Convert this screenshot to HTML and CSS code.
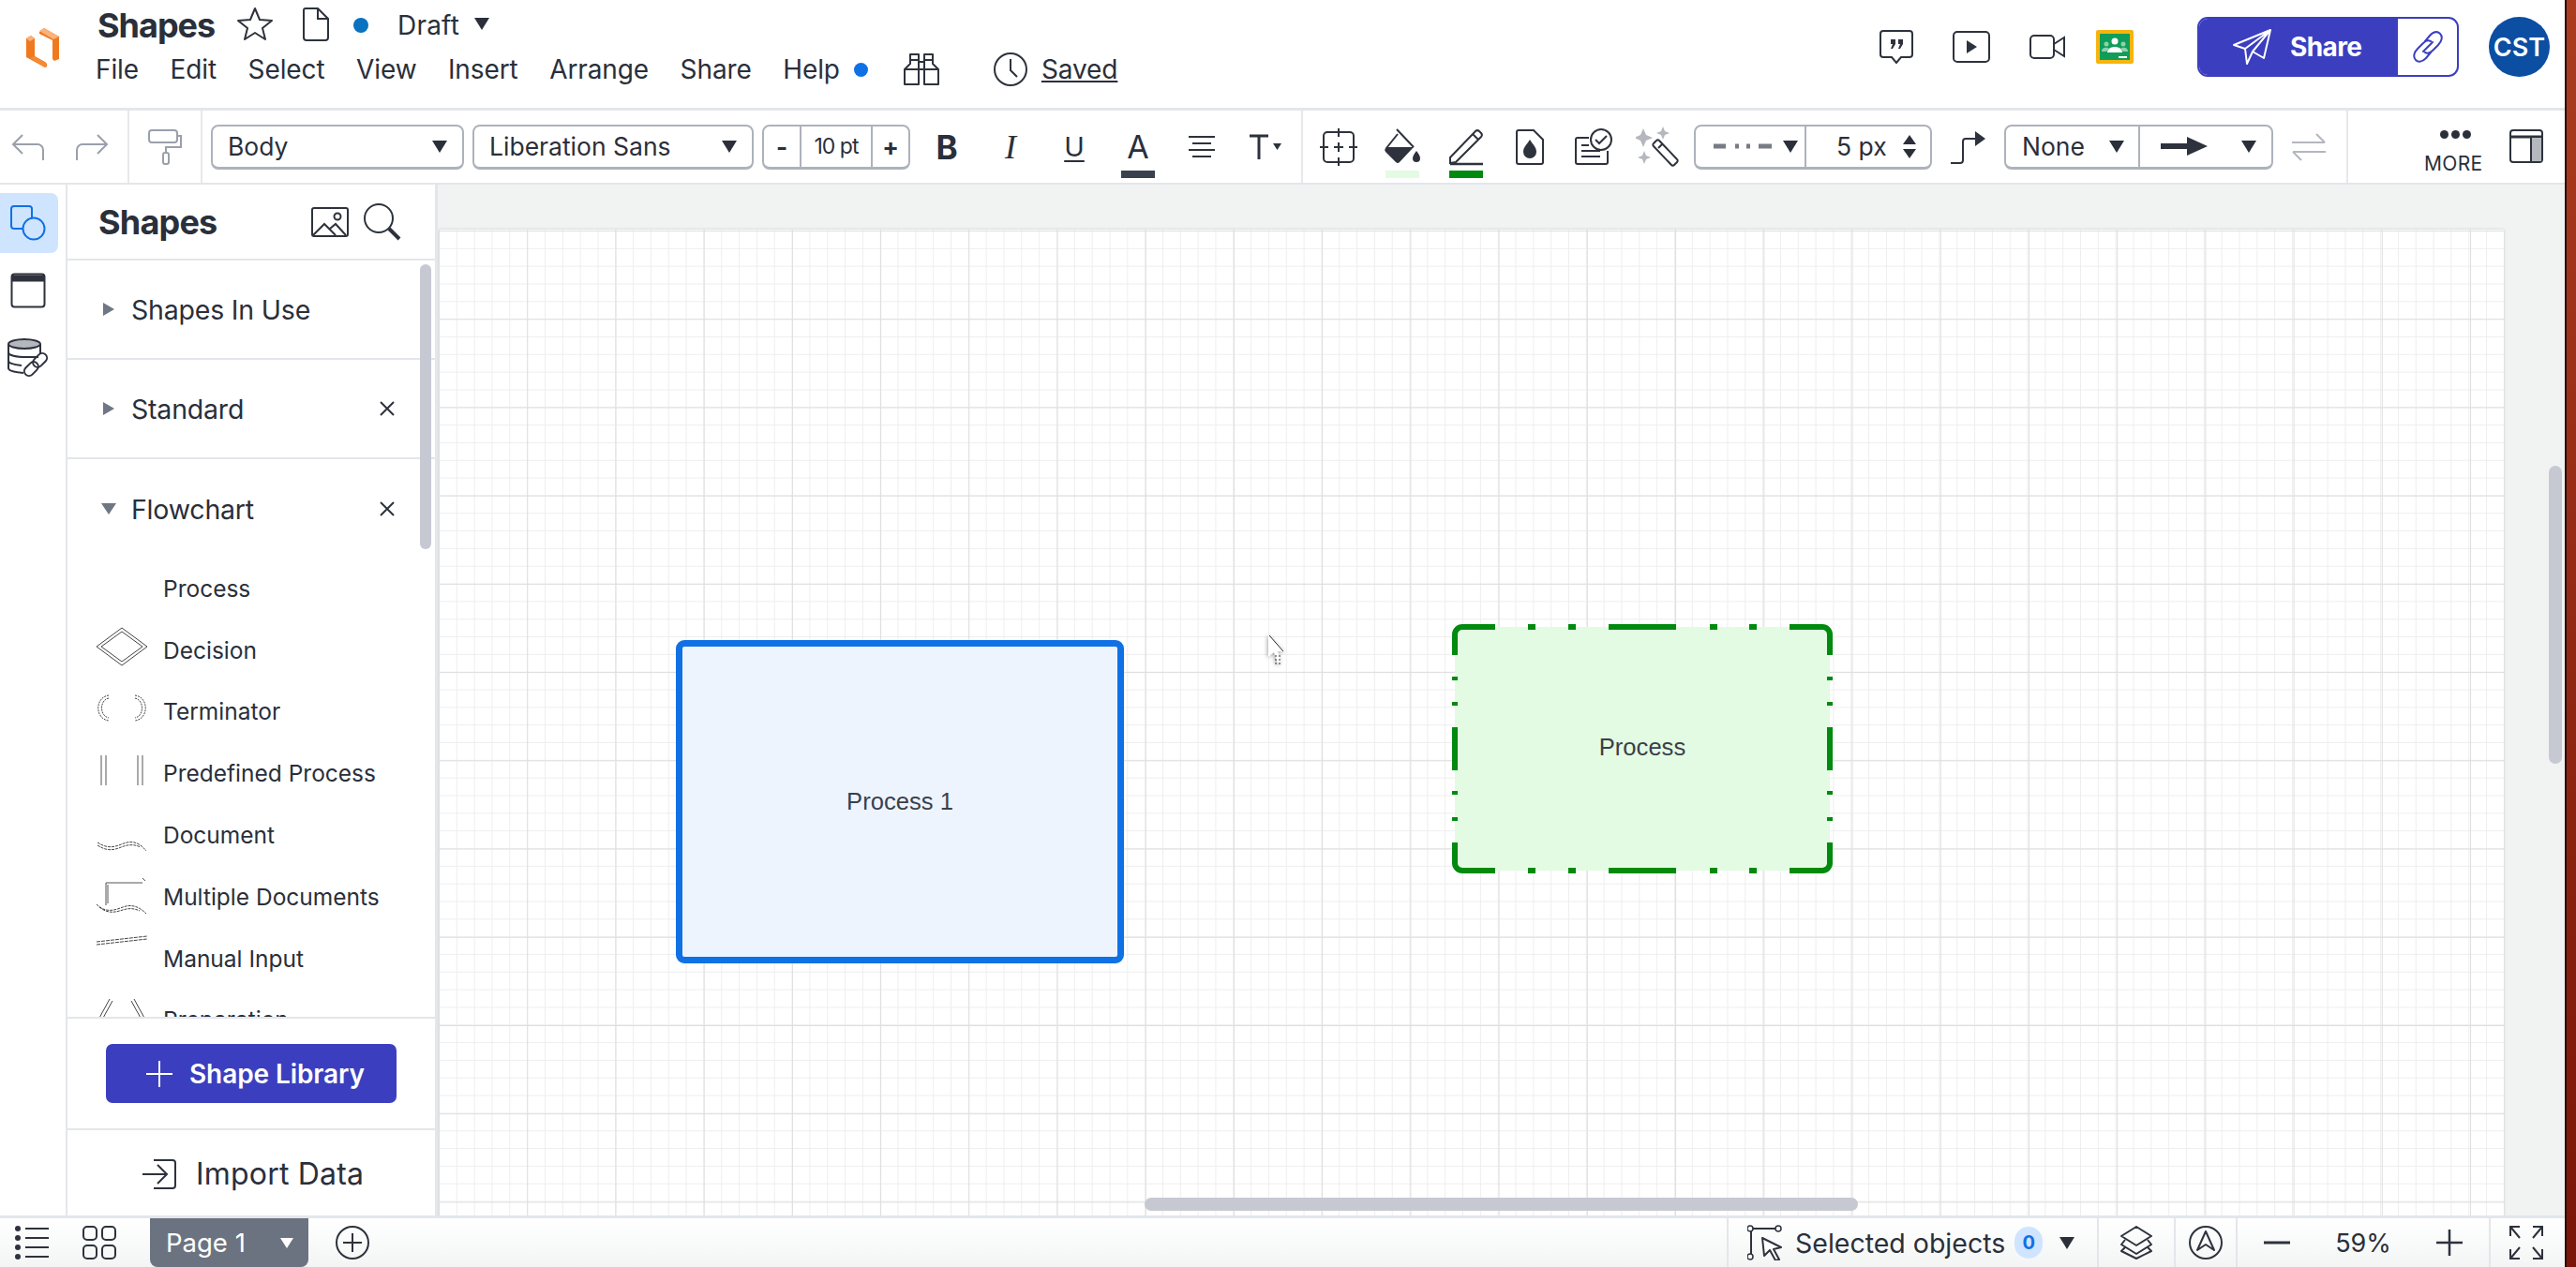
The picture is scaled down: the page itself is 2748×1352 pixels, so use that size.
FILE: index.html
```html
<!DOCTYPE html>
<html lang="en">
<head>
    <meta charset="UTF-8">
    <title>Shapes - Draft</title>
    <link rel="stylesheet" href="styles.css">
</head>
<body>
<div class="app">

    <!-- Title and menu bar -->
    <div class="topbar">
        <svg class="logo" width="38" height="44" viewBox="0 0 38 44">
            <polygon points="1,11 6,8 10,11 10,30 21,36 23,38 23,41 21,42 1,31" fill="#f0781e"/>
            <polygon points="1,11 6,8 10,11 5,14" fill="#f9b27c"/>
            <polygon points="10,30 23,38 21,42 5,32" fill="#f58a34"/>
            <polygon points="15,4 20,0 36,9 36,33 31,35 29,33 29,13 15,6" fill="#f0781e"/>
            <polygon points="15,3 20,0 36,9 30,12" fill="#f9b27c"/>
        </svg>
        <div class="doc-info">
            <div class="title-row">
                <span class="doc-title">Shapes</span>
                <svg class="star" width="38" height="36" viewBox="0 0 38 36"><path d="M19 2l5 12 13 1-10 8 3 12-11-7-11 7 3-12L1 15l13-1z" fill="none" stroke="#2d323c" stroke-width="2" stroke-linejoin="round"/></svg>
                <svg class="doc-icon" width="28" height="36" viewBox="0 0 28 36"><path d="M3 1h13l11 11v20a3 3 0 0 1-3 3H4a3 3 0 0 1-3-3V3a2 2 0 0 1 2-2zM16 1v11h11" fill="none" stroke="#2d323c" stroke-width="2"/></svg>
                <span class="status-dot"></span>
                <span class="draft">Draft</span>
                <span class="caret draft-caret"></span>
            </div>
            <div class="menu-row">
                <span class="menu-item">File</span>
                <span class="menu-item">Edit</span>
                <span class="menu-item">Select</span>
                <span class="menu-item">View</span>
                <span class="menu-item">Insert</span>
                <span class="menu-item">Arrange</span>
                <span class="menu-item">Share</span>
                <span class="menu-item help">Help<span class="help-dot"></span></span>
                <svg class="binoculars" width="38" height="36" viewBox="0 0 38 36"><path d="M7 2h9v32H1V18l6-6zM22 2h9v10l6 6v16H22zM16 10h6M16 18h6M1 18h15M22 18h15M7 8h9M22 8h9" fill="none" stroke="#2d323c" stroke-width="2" stroke-linejoin="round"/></svg>
                <svg class="clock" width="36" height="36" viewBox="0 0 36 36"><circle cx="18" cy="18" r="17" fill="none" stroke="#2d323c" stroke-width="2"/><path d="M18 7v12l7 7" fill="none" stroke="#2d323c" stroke-width="2"/></svg>
                <span class="saved">Saved</span>
            </div>
        </div>
        <div class="top-right">
            <svg class="top-icon" width="36" height="36" viewBox="0 0 36 36"><path d="M4 1h28a3 3 0 0 1 3 3v22a3 3 0 0 1-3 3h-9l-5 6-5-6H4a3 3 0 0 1-3-3V4a3 3 0 0 1 3-3z" fill="none" stroke="#2d323c" stroke-width="2"/><path d="M12 10h5v5l-3 5h-2l2-5h-2zM20 10h5v5l-3 5h-2l2-5h-2z" fill="#2d323c"/></svg>
            <svg class="top-icon" width="40" height="34" viewBox="0 0 40 34"><rect x="1" y="1" width="38" height="32" rx="4" fill="none" stroke="#2d323c" stroke-width="2"/><path d="M15 10l11 7-11 7z" fill="#2d323c"/></svg>
            <svg class="top-icon video" width="38" height="26" viewBox="0 0 38 26"><rect x="1" y="1" width="25" height="24" rx="4" fill="none" stroke="#2d323c" stroke-width="2"/><path d="M26 10l11-7v20l-11-7" fill="none" stroke="#2d323c" stroke-width="2"/></svg>
            <svg class="top-icon classroom" width="40" height="36" viewBox="0 0 40 36"><rect width="40" height="36" rx="2" fill="#f6b40e"/><rect x="4" y="4" width="32" height="28" fill="#109d58"/><circle cx="20" cy="12" r="3.5" fill="#fff"/><circle cx="11" cy="15" r="2.5" fill="#8fd0ae"/><circle cx="29" cy="15" r="2.5" fill="#8fd0ae"/><path d="M12 24c0-8 16-8 16 0z" fill="#fff"/><path d="M6 23c0-5 6-5 8-3l-3 3zM34 23c0-5-6-5-8-3l3 3z" fill="#8fd0ae"/><rect x="24" y="28" width="9" height="2" fill="#fff"/></svg>
            <div class="share-btn">
                <div class="share-main">
                    <svg width="42" height="38" viewBox="0 0 42 38"><path d="M1 17L40 1 33 31 21 24 15 37 13 21zM40 1L13 21M40 1L21 24" fill="none" stroke="#fff" stroke-width="2" stroke-linejoin="round"/></svg>
                    <span>Share</span>
                </div>
                <div class="share-link">
                    <svg width="36" height="36" viewBox="0 0 36 36"><path d="M15 12l5-6c4-4 8-5 11-2s2 8-2 12l-6 6c-3 3-6 3-8 2M21 24l-5 6c-4 4-8 5-11 2s-2-8 2-12l6-6c3-3 6-3 8-2M13 23l10-10" fill="none" stroke="#3b3fbf" stroke-width="2" stroke-linecap="round"/></svg>
                </div>
            </div>
            <div class="avatar">CST</div>
        </div>
    </div>

    <!-- Format toolbar -->
    <div class="toolbar">
        <div class="tb-group history">
            <svg width="36" height="30" viewBox="0 0 36 30"><path d="M34 29V18a6 6 0 0 0-6-6H3M12 2L2 12l10 10" fill="none" stroke="#9aa0aa" stroke-width="2"/></svg>
            <svg width="36" height="30" viewBox="0 0 36 30"><path d="M2 29V18a6 6 0 0 1 6-6h25M24 2l10 10-10 10" fill="none" stroke="#9aa0aa" stroke-width="2"/></svg>
        </div>
        <div class="tb-group roller">
            <svg width="38" height="38" viewBox="0 0 38 38"><rect x="1" y="1" width="30" height="13" rx="3" fill="none" stroke="#9aa0aa" stroke-width="2"/><path d="M31 7h4v12H19v6" fill="none" stroke="#9aa0aa" stroke-width="2"/><rect x="16" y="25" width="6" height="12" rx="2" fill="none" stroke="#9aa0aa" stroke-width="2"/></svg>
        </div>
        <div class="tb-text">
            <div class="select body-select"><span>Body</span><span class="caret"></span></div>
            <div class="select font-select"><span>Liberation Sans</span><span class="caret"></span></div>
            <div class="stepper">
                <span class="step-btn">-</span>
                <span class="step-val">10 pt</span>
                <span class="step-btn">+</span>
            </div>
            <span class="tb-btn glyph bold">B</span>
            <span class="tb-btn glyph italic">I</span>
            <span class="tb-btn glyph under">U</span>
            <span class="tb-btn glyph color-a">A<i class="swatch swatch-dark"></i></span>
            <span class="tb-btn">
                <svg width="30" height="26" viewBox="0 0 30 26"><path d="M1 2h28M5 9h20M1 16h28M5 23h20" stroke="#2d323c" stroke-width="2"/></svg>
            </span>
            <span class="tb-btn text-size">
                <svg width="38" height="30" viewBox="0 0 38 30"><path d="M2 3h20M12 3v25" stroke="#2d323c" stroke-width="3"/><path d="M27 11h9l-4.500 7z" fill="#2d323c"/></svg>
            </span>
        </div>
        <div class="tb-shape">
            <span class="tb-btn">
                <svg width="40" height="40" viewBox="0 0 40 40"><rect x="4" y="4" width="32" height="32" rx="4" fill="none" stroke="#2d323c" stroke-width="2"/><path d="M20 0v9M20 15v10M20 31v9M0 20h9M15 20h10M31 20h9" stroke="#2d323c" stroke-width="2"/></svg>
            </span>
            <span class="tb-btn">
                <svg width="40" height="40" viewBox="0 0 40 40"><path d="M14 1l18 19" stroke="#2d323c" stroke-width="2"/><path d="M15 6L3 21" fill="none" stroke="#2d323c" stroke-width="2"/><path d="M3 20h29L17 36a3 3 0 0 1-4 0L2 25a3 3 0 0 1 0-4z" fill="#2d323c"/><path d="M35 24c2 3 4 5 4 8a4 4 0 0 1-8 0c0-3 2-5 4-8z" fill="#2d323c"/></svg>
                <i class="swatch swatch-fill"></i>
            </span>
            <span class="tb-btn">
                <svg width="38" height="40" viewBox="0 0 38 40"><path d="M2 31L29 3a3 3 0 0 1 4 0l2 2a3 3 0 0 1 0 4L8 36l-6 1zM26 6l6 6" fill="none" stroke="#2d323c" stroke-width="2"/><path d="M2 38h35" stroke="#2d323c" stroke-width="2.500"/></svg>
                <i class="swatch swatch-line"></i>
            </span>
            <span class="tb-btn">
                <svg width="30" height="38" viewBox="0 0 30 38"><path d="M3 1h16l10 10v24a2 2 0 0 1-2 2H3a2 2 0 0 1-2-2V3a2 2 0 0 1 2-2z" fill="none" stroke="#2d323c" stroke-width="2"/><path d="M15 11c3 5 7 8 7 13a7 7 0 0 1-14 0c0-5 4-8 7-13z" fill="#2d323c"/></svg>
            </span>
            <span class="tb-btn">
                <svg width="40" height="40" viewBox="0 0 40 40"><path d="M15 10H3a2 2 0 0 0-2 2v24a2 2 0 0 0 2 2h30a2 2 0 0 0 2-2V24M7 18h8M7 24h20M7 30h20" fill="none" stroke="#2d323c" stroke-width="2"/><circle cx="28" cy="12" r="11" fill="#fff" stroke="#2d323c" stroke-width="2"/><path d="M22 12l4 4 8-8" fill="none" stroke="#2d323c" stroke-width="2"/></svg>
            </span>
            <span class="tb-btn">
                <svg width="46" height="44" viewBox="0 0 46 44"><path d="M8 2l3 7 7 3-7 3-3 7-3-7-7-3 7-3zM29 0l2 5 5 2-5 2-2 5-2-5-5-2 5-2zM9 26l2 5 5 2-5 2-2 5-2-5-5-2 5-2z" fill="#b4b7bd"/><path d="M19 18l3-3a2 2 0 0 1 3 0l19 20a2 2 0 0 1 0 3l-3 3a2 2 0 0 1-3 0L19 21a2 2 0 0 1 0-3zM24 23l4-4" fill="none" stroke="#2d323c" stroke-width="2"/></svg>
            </span>
        </div>
        <div class="select-pair line-pair">
            <div class="pair-cell dash-cell">
                <svg width="62" height="8" viewBox="0 0 62 8"><path d="M0 4h13M23 4h4M35 4h4M48 4h14" stroke="#777b84" stroke-width="5"/></svg>
                <span class="caret"></span>
            </div>
            <div class="pair-cell width-cell">
                <span>5 px</span>
                <span class="spinner"><i class="spin-up"></i><i class="spin-down"></i></span>
            </div>
        </div>
        <span class="tb-btn connector">
            <svg width="38" height="38" viewBox="0 0 38 38"><path d="M0 36h10a3 3 0 0 0 3-3V13a3 3 0 0 1 3-3h12" fill="none" stroke="#2d323c" stroke-width="2"/><path d="M26 2l11 8-11 8z" fill="#2d323c"/></svg>
        </span>
        <div class="select-pair ends-pair">
            <div class="pair-cell none-cell"><span>None</span><span class="caret"></span></div>
            <div class="pair-cell arrow-cell">
                <svg width="50" height="24" viewBox="0 0 50 24"><path d="M0 12h30" stroke="#2d323c" stroke-width="6"/><path d="M28 2l22 10-22 10z" fill="#2d323c"/></svg>
                <span class="caret"></span>
            </div>
        </div>
        <span class="tb-btn swap">
            <svg width="38" height="32" viewBox="0 0 38 32"><path d="M1 11h35M27 2l9 9M37 21H2M11 30l-9-9" fill="none" stroke="#b4b7bd" stroke-width="2"/></svg>
        </span>
        <div class="more">
            <span class="more-dots"><i></i><i></i><i></i></span>
            <span class="more-label">MORE</span>
        </div>
        <svg class="panel-toggle" width="36" height="36" viewBox="0 0 36 36"><rect x="1" y="1" width="34" height="34" rx="3" fill="none" stroke="#2d323c" stroke-width="2"/><path d="M1 8h34" stroke="#2d323c" stroke-width="3"/><rect x="23" y="9" width="11" height="25" fill="#b4b7bd"/><path d="M23 8v27" stroke="#2d323c" stroke-width="2"/></svg>
    </div>

    <div class="main">
        <div class="rail">
            <div class="rail-btn active">
                <svg width="38" height="38" viewBox="0 0 38 38"><path d="M13 25H4a3 3 0 0 1-3-3V4a3 3 0 0 1 3-3h16a3 3 0 0 1 3 3v9" fill="none" stroke="#1071e5" stroke-width="2"/><circle cx="25" cy="25" r="11.500" fill="none" stroke="#1071e5" stroke-width="2"/></svg>
            </div>
            <div class="rail-btn">
                <svg width="38" height="38" viewBox="0 0 38 38"><rect x="1.500" y="1.500" width="35" height="35" rx="3" fill="none" stroke="#2d323c" stroke-width="2"/><path d="M1 6h36" stroke="#2d323c" stroke-width="7"/></svg>
            </div>
            <div class="rail-btn">
                <svg width="44" height="42" viewBox="0 0 44 42"><ellipse cx="18" cy="6" rx="17" ry="5" fill="#b4b7bd" stroke="#2d323c" stroke-width="2"/><path d="M1 6v26c0 2 5 4 16 5M1 15c0 3 8 5 20 5h12M1 24c0 2 5 4 14 5M35 6v10" fill="none" stroke="#2d323c" stroke-width="2"/><g transform="rotate(-45 30 28)"><rect x="15" y="23" width="17" height="10" rx="5" fill="#fff" stroke="#2d323c" stroke-width="2"/><rect x="28" y="23" width="17" height="10" rx="5" fill="none" stroke="#2d323c" stroke-width="2"/></g></svg>
            </div>
        </div>

        <div class="panel">
            <div class="panel-head">
                <span class="panel-title">Shapes</span>
                <svg class="panel-pic" width="40" height="32" viewBox="0 0 40 32"><rect x="1" y="1" width="38" height="30" rx="2" fill="none" stroke="#2d323c" stroke-width="2"/><circle cx="28" cy="10" r="3.500" fill="none" stroke="#2d323c" stroke-width="2"/><path d="M2 30l12-12 12 12M20 23l6-5 11 12" fill="none" stroke="#2d323c" stroke-width="2"/></svg>
                <svg width="40" height="40" viewBox="0 0 40 40"><circle cx="16" cy="16" r="15" fill="none" stroke="#2d323c" stroke-width="2"/><path d="M27 27l11 11" stroke="#2d323c" stroke-width="4"/></svg>
            </div>
            <div class="sections">
                <div class="section">
                    <span class="arrow-right"></span><span class="sec-name">Shapes In Use</span>
                </div>
                <div class="section">
                    <span class="arrow-right"></span><span class="sec-name">Standard</span>
                    <svg class="sec-close" width="18" height="18" viewBox="0 0 18 18"><path d="M2 2l14 14M16 2L2 16" stroke="#2d323c" stroke-width="2"/></svg>
                </div>
                <div class="section open">
                    <span class="arrow-down"></span><span class="sec-name">Flowchart</span>
                    <svg class="sec-close" width="18" height="18" viewBox="0 0 18 18"><path d="M2 2l14 14M16 2L2 16" stroke="#2d323c" stroke-width="2"/></svg>
                </div>
                <div class="shape-list">
                    <div class="shape-row"><span class="shape-thumb"></span>Process</div>
                    <div class="shape-row">
                        <svg class="shape-thumb" viewBox="0 0 54 60"><path d="M27 6l27 20-27 20L0 26zM27 10l22 16-22 16L5 26z" fill="none" stroke="#444" stroke-width="1"/></svg>Decision
                    </div>
                    <div class="shape-row">
                        <svg class="shape-thumb" viewBox="0 0 54 60"><path d="M13 13C-2 15-2 38 13 40M13 16C3 18 3 35 13 37M41 13c15 2 15 25 0 27M41 16c10 2 10 19 0 21" fill="none" stroke="#444" stroke-width="1" stroke-dasharray="2 1"/></svg>Terminator
                    </div>
                    <div class="shape-row">
                        <svg class="shape-thumb" viewBox="0 0 54 60"><path d="M5 11v32M10 11v32M44 11v32M49 11v32" fill="none" stroke="#555" stroke-width="1"/></svg>Predefined Process
                    </div>
                    <div class="shape-row">
                        <svg class="shape-thumb" viewBox="0 0 54 60"><path d="M1 38c12 8 20 4 28 1 8-3 16-2 24 8M1 41c12 8 20 4 28 1 6-2 12-2 18 1" fill="none" stroke="#444" stroke-width="1" stroke-dasharray="3 1"/></svg>Document
                    </div>
                    <div class="shape-row">
                        <svg class="shape-thumb" viewBox="0 0 54 60"><path d="M10 15h39M49 10l3 3M10 15v24M12 17v20" fill="none" stroke="#555" stroke-width="1"/><path d="M0 38c10 10 20 6 28 3 8-3 16-2 25 7M3 41c10 8 18 5 25 3 6-2 12-2 18 1" fill="none" stroke="#444" stroke-width="1" stroke-dasharray="3 1"/></svg>Multiple Documents
                    </div>
                    <div class="shape-row">
                        <svg class="shape-thumb" viewBox="0 0 54 60"><path d="M0 12l54-6M0 15l54-6" fill="none" stroke="#444" stroke-width="1" stroke-dasharray="4 1"/></svg>Manual Input
                    </div>
                    <div class="shape-row">
                        <svg class="shape-thumb" viewBox="0 0 54 60"><path d="M2 30l12-22M6 30l11-20M52 30L40 8M48 30L37 10" fill="none" stroke="#444" stroke-width="1"/></svg>Preparation
                    </div>
                </div>
            </div>
            <div class="lib-wrap">
                <div class="lib-btn">
                    <svg width="28" height="28" viewBox="0 0 28 28"><path d="M14 0v28M0 14h28" stroke="#fff" stroke-width="2"/></svg>
                    Shape Library
                </div>
            </div>
            <div class="import">
                <svg width="36" height="32" viewBox="0 0 36 32"><path d="M12 1h20a3 3 0 0 1 3 3v24a3 3 0 0 1-3 3H12M0 16h26M16 6l10 10-10 10" fill="none" stroke="#2d323c" stroke-width="2"/></svg>
                Import Data
            </div>
        </div>

        <div class="canvas">
            <div class="page">
                <div class="proc proc-blue">Process 1</div>
                <div class="proc proc-green">
                    <svg class="dash-frame" width="406" height="266" viewBox="0 0 406 266">
                        <path d="M3 33V11a8 8 0 0 1 8-8h35M360 3h35a8 8 0 0 1 8 8v22M3 233v22a8 8 0 0 0 8 8h35M360 263h35a8 8 0 0 0 8-8v-22" fill="none" stroke="#008a0e" stroke-width="6"/>
                        <path d="M81 3h8M124 3h8M167 3h72M275 3h8M317 3h8M81 263h8M124 263h8M167 263h72M275 263h8M317 263h8M3 56v4M3 83v4M3 110v46M3 178v4M3 206v4M403 56v4M403 83v4M403 110v46M403 178v4M403 206v4" fill="none" stroke="#008a0e" stroke-width="6"/>
                    </svg>
                    Process
                </div>
                <svg class="ghost-cursor" width="22" height="38" viewBox="0 0 22 38"><path d="M2 2v24l6-5 4 12 4-2-4-11h8z" fill="#fff"/><path d="M3 3l15 17" stroke="#222" stroke-width="1"/><path d="M10 24v10M14 24v10" stroke="#333" stroke-width="1" stroke-dasharray="2 2"/></svg>
            </div>
            <div class="vscroll"></div>
            <div class="hscroll"></div>
        </div>
    </div>

    <!-- Pages and zoom bar -->
    <div class="bottombar">
        <svg class="bb-list" width="36" height="36" viewBox="0 0 36 36"><path d="M11 3h25M11 13h25M11 23h25M11 33h25" stroke="#2d323c" stroke-width="2"/><circle cx="3" cy="3" r="3" fill="#2d323c"/><circle cx="3" cy="13" r="3" fill="#2d323c"/><circle cx="3" cy="23" r="3" fill="#2d323c"/><circle cx="3" cy="33" r="3" fill="#2d323c"/></svg>
        <svg class="bb-grid" width="36" height="36" viewBox="0 0 36 36"><rect x="1" y="1" width="14" height="14" rx="4" fill="none" stroke="#2d323c" stroke-width="2"/><rect x="21" y="1" width="14" height="14" rx="4" fill="none" stroke="#2d323c" stroke-width="2"/><rect x="1" y="21" width="14" height="14" rx="4" fill="none" stroke="#2d323c" stroke-width="2"/><rect x="21" y="21" width="14" height="14" rx="4" fill="none" stroke="#2d323c" stroke-width="2"/></svg>
        <div class="page-tab"><span>Page 1</span><span class="caret caret-white"></span></div>
        <svg class="bb-add" width="36" height="36" viewBox="0 0 36 36"><circle cx="18" cy="18" r="17" fill="none" stroke="#2d323c" stroke-width="2"/><path d="M18 8v20M8 18h20" stroke="#2d323c" stroke-width="2"/></svg>
        <div class="bb-right">
            <div class="bb-cell selected">
                <svg width="40" height="38" viewBox="0 0 40 38"><path d="M4 4h28M4 4v30" stroke="#2d323c" stroke-width="2"/><circle cx="3" cy="4" r="3" fill="#fff" stroke="#2d323c" stroke-width="1.500"/><circle cx="33" cy="4" r="3" fill="#fff" stroke="#2d323c" stroke-width="1.500"/><circle cx="3" cy="34" r="3" fill="#fff" stroke="#2d323c" stroke-width="1.500"/><path d="M16 14l20 10-8 2 6 11-4 1-6-11-6 6z" fill="#fff" stroke="#2d323c" stroke-width="2" stroke-linejoin="round"/></svg>
                <span class="sel-label">Selected objects</span>
                <span class="sel-badge">0</span>
                <span class="caret"></span>
            </div>
            <div class="bb-cell layers">
                <svg width="36" height="36" viewBox="0 0 36 36"><path d="M18 1L34 11 18 21 2 11zM6 15l-4 5 16 10 16-10-4-5M6 23l-4 4 16 8 16-8-4-4" fill="none" stroke="#2d323c" stroke-width="2" stroke-linejoin="round"/></svg>
            </div>
            <div class="bb-cell compass">
                <svg width="36" height="36" viewBox="0 0 36 36"><circle cx="18" cy="18" r="17" fill="none" stroke="#2d323c" stroke-width="2"/><path d="M18 6l9 20-9-6-9 6z" fill="none" stroke="#2d323c" stroke-width="2" stroke-linejoin="round"/></svg>
            </div>
            <div class="bb-cell zoom">
                <svg width="28" height="28" viewBox="0 0 28 28"><path d="M0 14h28" stroke="#2d323c" stroke-width="3"/></svg>
                <span class="zoom-val">59%</span>
                <svg width="28" height="28" viewBox="0 0 28 28"><path d="M0 14h28M14 0v28" stroke="#2d323c" stroke-width="2.500"/></svg>
            </div>
            <div class="bb-cell expand">
                <svg width="36" height="36" viewBox="0 0 36 36"><path d="M1 11V1h10M1 1l10 12M35 11V1H25M35 1L25 13M1 25v10h10M1 35l10-12M35 25v10H25M35 35L25 23" fill="none" stroke="#2d323c" stroke-width="2"/></svg>
            </div>
        </div>
    </div>
</div>
<div class="edge"></div>
</body>
</html>
```

FILE: styles.css
```css
* {
    box-sizing: border-box;
}
body {
    margin: 0;
    width: 2748px;
    height: 1352px;
    display: flex;
    overflow: hidden;
    font-family: 'Inter', sans-serif;
    color: #2a2f3a;
    background: #fff;
}
svg {
    display: block;
    flex: none;
}
.app {
    width: 2736px;
    height: 1352px;
    display: flex;
    flex-direction: column;
}
.edge {
    width: 12px;
    background: linear-gradient(#ab3c20, #7a1508);
    border-left: 2px solid #2a0c06;
}
.caret {
    display: inline-block;
    width: 0;
    height: 0;
    border-left: 8px solid transparent;
    border-right: 8px solid transparent;
    border-top: 13px solid #2a2f3a;
    flex: none;
}
.caret-white {
    border-left-width: 7px;
    border-right-width: 7px;
    border-top: 11px solid #fff;
}

/* top bar */
.topbar {
    height: 115px;
    flex: none;
    display: flex;
    align-items: flex-start;
    padding-left: 27px;
}
.logo {
    margin-top: 30px;
    margin-right: 39px;
}
.doc-info {
    display: flex;
    flex-direction: column;
}
.title-row {
    height: 54px;
    display: flex;
    align-items: center;
}
.doc-title {
    font-size: 36px;
    font-weight: 700;
    letter-spacing: -1px;
    width: 149px;
}
.star {
    margin-top: -4px;
}
.doc-icon {
    margin-left: 32px;
    margin-top: -2px;
}
.status-dot {
    width: 16px;
    height: 16px;
    border-radius: 50%;
    background: #0b72c0;
    margin-left: 26px;
}
.draft {
    font-size: 28px;
    margin-left: 31px;
    letter-spacing: 0.2px;
}
.draft-caret {
    margin-left: 16px;
    margin-top: -4px;
}
.menu-row {
    height: 40px;
    margin-left: -2px;
    display: flex;
    align-items: center;
    font-size: 28px;
}
.menu-item {
    margin-right: 33.500px;
    letter-spacing: -0.1px;
}
.help {
    display: flex;
    align-items: center;
    margin-right: 0;
}
.help-dot {
    width: 15px;
    height: 15px;
    border-radius: 50%;
    background: #1071e5;
    margin-left: 15px;
}
.binoculars {
    margin-left: 38px;
}
.clock {
    margin-left: 58px;
}
.saved {
    margin-left: 15px;
    text-decoration: underline;
    letter-spacing: -0.1px;
}
.top-right {
    margin-left: auto;
    height: 100px;
    display: flex;
    align-items: center;
    padding-right: 16px;
}
.top-icon {
    margin-right: 42px;
}
.video {
    margin-right: 33px;
}
.classroom {
    margin-right: 68px;
}
.share-btn {
    width: 279px;
    height: 64px;
    display: flex;
    border: 2px solid #3b3fbf;
    border-radius: 11px;
    background: #fff;
    overflow: hidden;
    margin-right: 32px;
}
.share-main {
    width: 212px;
    background: #3b3fbf;
    color: #fff;
    font-size: 28px;
    font-weight: 700;
    display: flex;
    align-items: center;
    gap: 19px;
    padding-left: 36px;
    letter-spacing: -0.6px;
}
.share-link {
    flex: 1;
    display: flex;
    align-items: center;
    justify-content: center;
}
.avatar {
    width: 65px;
    height: 64px;
    border-radius: 50%;
    background: #0b4ea2;
    color: #fff;
    font-size: 27px;
    font-weight: 600;
    display: flex;
    align-items: center;
    justify-content: center;
}

/* toolbar */
.toolbar {
    height: 82px;
    flex: none;
    display: flex;
    align-items: center;
    border-top: 3px solid #e3e6ea;
    border-bottom: 2px solid #e3e6ea;
    position: relative;
}
.tb-group {
    height: 100%;
    display: flex;
    align-items: center;
    border-right: 2px solid #e6e8eb;
}
.history {
    width: 138px;
    padding-left: 12px;
    gap: 32px;
}
.roller {
    width: 78px;
    padding-left: 20px;
}
.tb-text {
    height: 100%;
    display: flex;
    align-items: center;
    padding-left: 9px;
    width: 1174px;
    border-right: 2px solid #e6e8eb;
}
.select {
    height: 48px;
    display: flex;
    align-items: center;
    justify-content: space-between;
    border: 2px solid #adb2bb;
    border-bottom-width: 3px;
    border-radius: 8px;
    font-size: 26.500px;
    padding: 0 16px;
    margin-right: 9px;
}
.body-select {
    width: 270px;
}
.font-select {
    width: 300px;
}
.stepper {
    width: 158px;
    height: 48px;
    display: flex;
    align-items: center;
    border: 2px solid #adb2bb;
    border-bottom-width: 3px;
    border-radius: 8px;
}
.step-btn {
    flex: 1;
    text-align: center;
    font-size: 26px;
    font-weight: 700;
}
.step-val {
    width: 78px;
    height: 100%;
    border-left: 2px solid #adb2bb;
    border-right: 2px solid #adb2bb;
    display: flex;
    align-items: center;
    justify-content: center;
    font-size: 23px;
    letter-spacing: -1px;
}
.tb-btn {
    width: 68px;
    height: 100%;
    flex: none;
    display: flex;
    align-items: center;
    justify-content: center;
    position: relative;
}
.tb-text .tb-btn:first-of-type {
    margin-left: 5px;
}
.glyph {
    font-size: 32px;
}
.bold {
    font-weight: 700;
    font-size: 35px;
}
.italic {
    font-family: 'Liberation Serif', serif;
    font-style: italic;
    font-size: 36px;
}
.under {
    text-decoration: underline;
    text-underline-offset: 4px;
    font-size: 29px;
}
.color-a {
    font-size: 34px;
    font-weight: 400;
}
.swatch {
    position: absolute;
    bottom: 5px;
    width: 36px;
    height: 8px;
    left: 16px;
}
.swatch-dark {
    background: #3a414e;
}
.swatch-fill {
    background: #e3fbe3;
}
.swatch-line {
    background: #008a0e;
}
.tb-shape {
    display: flex;
    height: 100%;
    padding-left: 4px;
}
.select-pair {
    height: 48px;
    display: flex;
    border: 2px solid #adb2bb;
    border-bottom-width: 3px;
    border-radius: 8px;
    flex: none;
}
.pair-cell {
    display: flex;
    align-items: center;
    justify-content: space-between;
    font-size: 26.500px;
}
.line-pair {
    width: 254px;
    margin-left: 5px;
}
.dash-cell {
    width: 118px;
    padding: 0 7px 0 19px;
    border-right: 2px solid #adb2bb;
}
.width-cell {
    flex: 1;
    padding: 0 15px 0 32px;
}
.spinner {
    display: flex;
    flex-direction: column;
    gap: 5px;
}
.spinner i {
    width: 0;
    height: 0;
    border-left: 7px solid transparent;
    border-right: 7px solid transparent;
}
.spin-up {
    border-bottom: 10px solid #2a2f3a;
}
.spin-down {
    border-top: 10px solid #2a2f3a;
}
.connector {
    width: 77px;
}
.ends-pair {
    width: 287px;
}
.none-cell {
    width: 143px;
    padding: 0 15px 0 17px;
    border-right: 2px solid #adb2bb;
}
.arrow-cell {
    flex: 1;
    padding: 0 16px 0 22px;
}
.swap {
    width: 76px;
}
.more {
    height: 100%;
    width: 192px;
    margin-left: 2px;
    border-left: 2px solid #e6e8eb;
    display: flex;
    flex-direction: column;
    align-items: flex-start;
    padding: 21px 0 0 81px;
}
.more-dots {
    display: flex;
    gap: 3px;
    margin-left: 17px;
}
.more-dots i {
    width: 9px;
    height: 9px;
    border-radius: 50%;
    background: #2a2f3a;
}
.more-label {
    font-size: 21px;
    margin-top: 14px;
    letter-spacing: 0.3px;
}
.panel-toggle {
    position: absolute;
    left: 2677px;
    top: 20px;
}

/* main area */
.main {
    flex: 1;
    display: flex;
    min-height: 0;
}
.rail {
    width: 72px;
    flex: none;
    border-right: 2px solid #e3e6ea;
    padding-top: 9px;
}
.rail-btn {
    width: 62px;
    height: 64px;
    margin-bottom: 8px;
    display: flex;
    align-items: center;
    justify-content: center;
    padding-right: 2px;
}
.rail-btn.active {
    background: #cfe4ff;
    border-radius: 0 8px 8px 0;
}
.panel {
    width: 395px;
    flex: none;
    display: flex;
    flex-direction: column;
    border-right: 3px solid #e3e6ea;
}
.panel-head {
    height: 81px;
    flex: none;
    display: flex;
    align-items: center;
    padding: 0 36px 0 33px;
    border-bottom: 2px solid #e3e6ea;
}
.panel-title {
    font-size: 36px;
    font-weight: 700;
    letter-spacing: -0.8px;
    margin-right: auto;
}
.panel-pic {
    margin-right: 16px;
}
.sections {
    flex: 1;
    min-height: 0;
    overflow: hidden;
    position: relative;
}
.sections::after {
    content: "";
    position: absolute;
    right: 4px;
    top: 4px;
    width: 12px;
    height: 304px;
    border-radius: 6px;
    background: #c6c9d2;
}
.section {
    height: 106px;
    display: flex;
    align-items: center;
    padding-left: 38px;
    border-bottom: 2px solid #e3e6ea;
}
.section.open {
    border-bottom: 0;
}
.arrow-right {
    width: 0;
    height: 0;
    border-top: 7px solid transparent;
    border-bottom: 7px solid transparent;
    border-left: 12px solid #6f7684;
    margin-right: 18px;
}
.arrow-down {
    width: 0;
    height: 0;
    border-left: 8px solid transparent;
    border-right: 8px solid transparent;
    border-top: 12px solid #6f7684;
    margin-left: -2px;
    margin-right: 16px;
}
.sec-name {
    font-size: 28.500px;
    letter-spacing: -0.2px;
}
.sec-close {
    margin-left: auto;
    margin-right: 42px;
}
.shape-list {
    margin-top: -1px;
}
.shape-row {
    height: 65.800px;
    display: flex;
    align-items: center;
    padding-left: 31px;
    font-size: 24.500px;
}
.shape-thumb {
    width: 54px;
    height: 60px;
    margin-right: 17px;
    flex: none;
}
.lib-wrap {
    height: 121px;
    flex: none;
    border-top: 2px solid #e3e6ea;
    border-bottom: 2px solid #e3e6ea;
    display: flex;
    align-items: center;
    padding-left: 41px;
}
.lib-btn {
    width: 310px;
    height: 63px;
    display: flex;
    align-items: center;
    gap: 18px;
    padding-left: 43px;
    border-radius: 7px;
    background: #3b3fbf;
    color: #fff;
    font-size: 28px;
    font-weight: 600;
    letter-spacing: -0.1px;
}
.import {
    height: 91px;
    flex: none;
    display: flex;
    align-items: center;
    gap: 21px;
    padding: 2px 0 0 80px;
    font-size: 32px;
    letter-spacing: 0.2px;
}

/* canvas */
.canvas {
    flex: 1;
    position: relative;
    overflow: hidden;
    background: #f1f3f3;
}
.page {
    position: absolute;
    left: 1px;
    top: 48px;
    width: 2203px;
    height: 1100px;
    background-color: #fff;
    box-shadow: 0 0 3px rgba(0, 0, 0, 0.18);
    background-image:
        linear-gradient(to right, #dedede 1px, transparent 1px),
        linear-gradient(to bottom, #dedede 1px, transparent 1px),
        linear-gradient(to right, #eeeeee 1px, transparent 1px),
        linear-gradient(to bottom, #eeeeee 1px, transparent 1px);
    background-size: 94.22px 94.22px, 94.22px 94.22px, 18.84px 18.84px, 18.84px 18.84px;
    background-position: 0 1px;
}
.proc {
    position: absolute;
    display: flex;
    align-items: center;
    justify-content: center;
    font-family: 'Liberation Sans', sans-serif;
    font-size: 25.6px;
    color: #3a3f4b;
}
.proc-blue {
    left: 253px;
    top: 438px;
    width: 478px;
    height: 345px;
    border: 7px solid #1071e5;
    border-radius: 9px;
    background: #edf4fe;
}
.proc-green {
    left: 1081px;
    top: 421px;
    width: 406px;
    height: 266px;
    padding-bottom: 3px;
    background: linear-gradient(#e3fbe3, #e3fbe3) no-repeat center / 400px 260px;
}
.dash-frame {
    position: absolute;
    left: 0;
    top: 0;
}
.ghost-cursor {
    position: absolute;
    left: 883px;
    top: 430px;
    filter: drop-shadow(-1px 1px 2px rgba(0, 0, 0, 0.35));
}
.vscroll {
    position: absolute;
    left: 2252px;
    top: 300px;
    width: 14px;
    height: 318px;
    border-radius: 7px;
    background: #c6c9d2;
}
.hscroll {
    position: absolute;
    left: 754px;
    top: 1081px;
    width: 761px;
    height: 14px;
    border-radius: 7px;
    background: #c6c9d2;
}

/* bottom bar */
.bottombar {
    height: 55px;
    flex: none;
    display: flex;
    align-items: center;
    border-top: 3px solid #e3e6ea;
    background: linear-gradient(#fff, #f3f5f5);
    padding-left: 16px;
}
.bb-list {
    margin-right: 36px;
}
.bb-grid {
    margin-right: 36px;
}
.page-tab {
    width: 169px;
    height: 100%;
    background: #6c7380;
    color: #fff;
    font-size: 27.500px;
    display: flex;
    align-items: center;
    padding-left: 17px;
    border-radius: 0 0 8px 8px;
    margin-right: 29px;
}
.page-tab .caret {
    margin-left: auto;
    margin-right: 16px;
}
.bb-right {
    margin-left: auto;
    height: 100%;
    display: flex;
}
.bb-cell {
    height: 100%;
    display: flex;
    align-items: center;
    justify-content: center;
    border-left: 2px solid #e3e6ea;
}
.selected {
    width: 395px;
    justify-content: flex-start;
    padding-left: 20px;
    font-size: 28.500px;
}
.sel-label {
    margin-left: 11px;
}
.sel-badge {
    width: 30px;
    height: 34px;
    border-radius: 15px;
    background: #cfe4ff;
    color: #1071e5;
    font-size: 20px;
    font-weight: 700;
    display: flex;
    align-items: center;
    justify-content: center;
    margin-left: 10px;
    margin-right: 18px;
}
.layers {
    width: 82px;
}
.compass {
    width: 66px;
}
.zoom {
    width: 270px;
    justify-content: space-between;
    padding: 0 28px;
    font-size: 27px;
}
.expand {
    width: 81px;
    padding-right: 4px;
}
```
